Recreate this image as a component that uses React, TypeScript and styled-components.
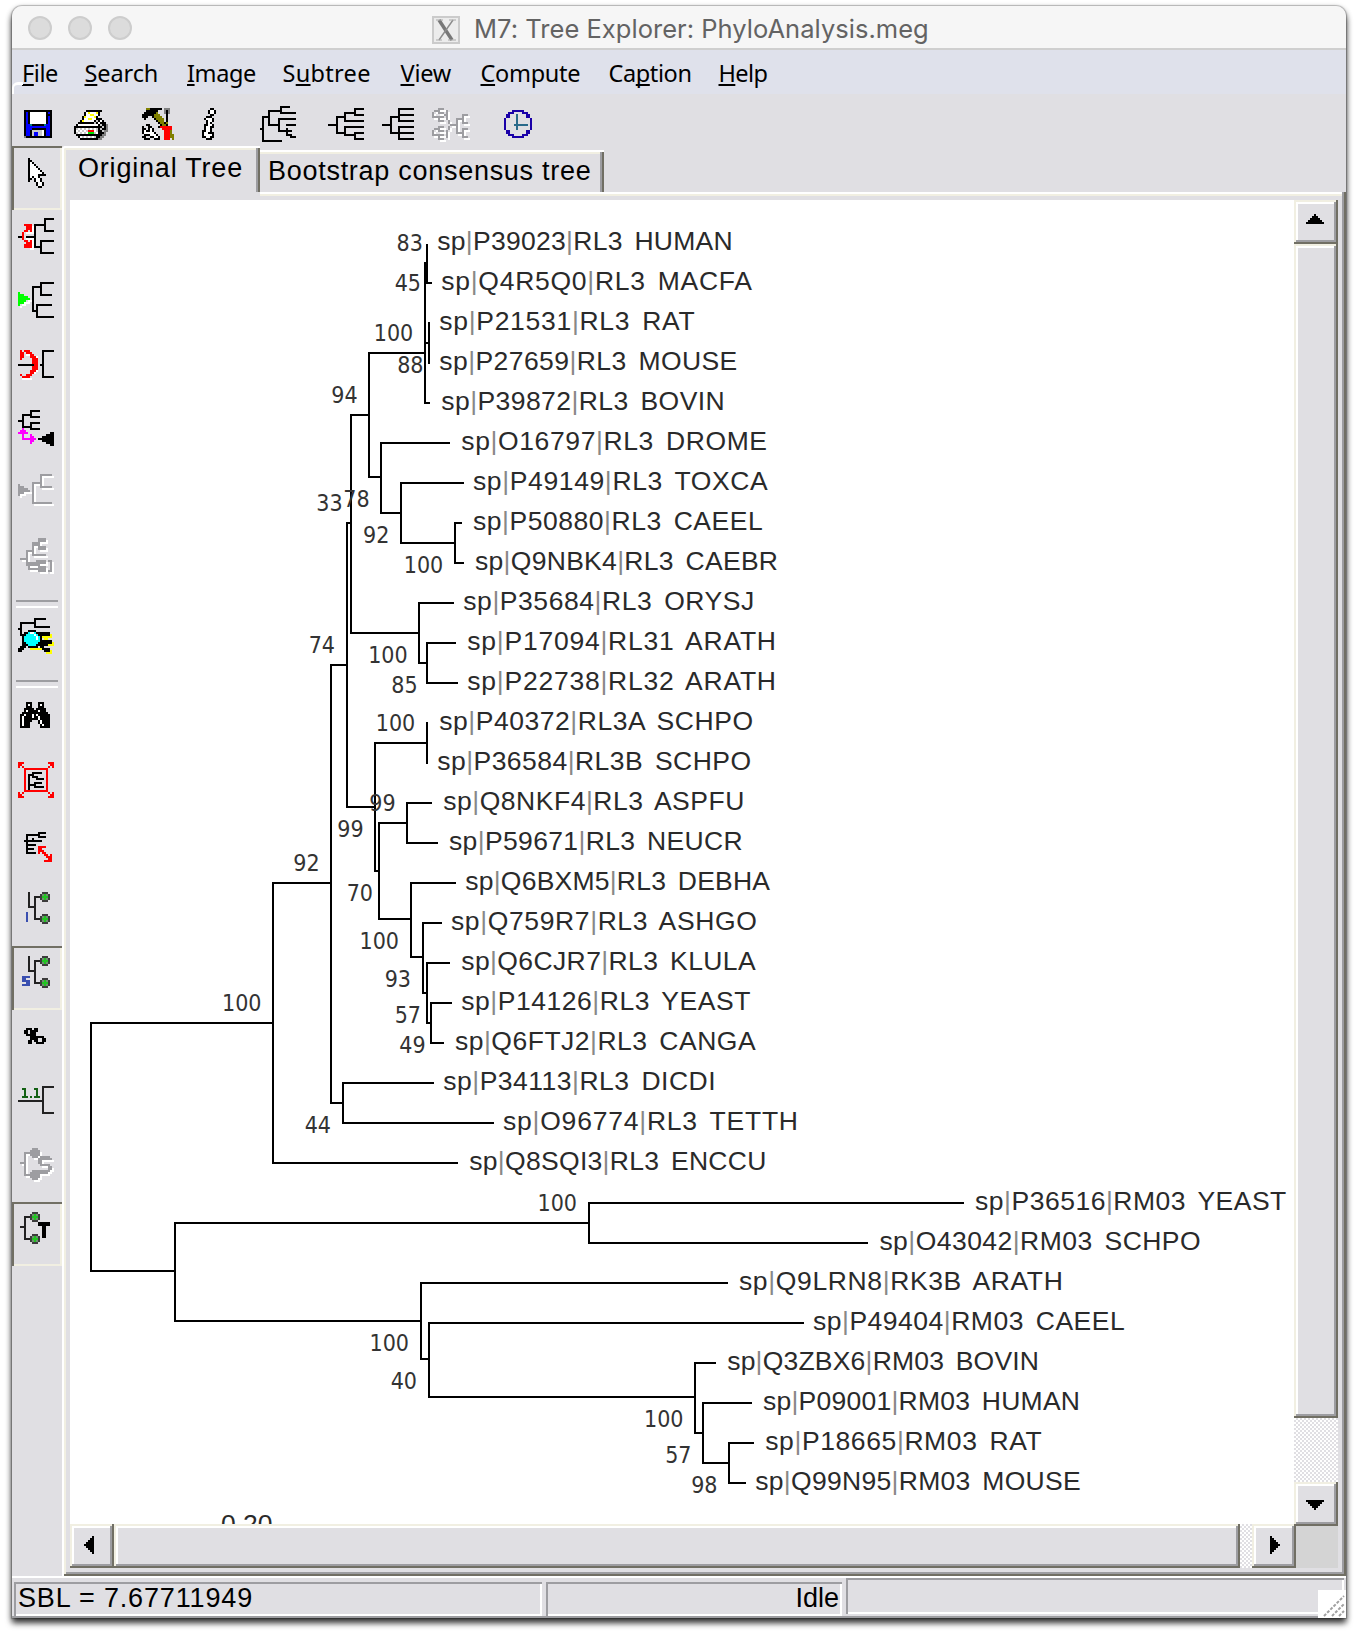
import React from "react";
import styled, { createGlobalStyle, css } from "styled-components";

const C = {
  face: "#e0dfe3",
  cream: "#f1efe2",
  shade: "#9d9da1",
  dark: "#716f64",
  menu: "#dfe1eb",
};

const Global = createGlobalStyle`
  html, body { margin: 0; padding: 0; background: #fff; }
  * { box-sizing: border-box; }
`;

/* ---------- window frame ---------- */

const Desktop = styled.div`
  width: 1358px;
  height: 1636px;
  padding: 6px 12px 18px;
  overflow: hidden;
  background: #fff;
`;

const Window = styled.div`
  width: 1334px;
  height: 1612px;
  display: flex;
  flex-direction: column;
  background: ${C.face};
  border-radius: 10px 10px 0 0;
  box-shadow: 0 0 1px 1px rgba(0, 0, 0, 0.22), 0 5px 6px rgba(0, 0, 0, 0.75), 0 2px 6px rgba(0, 0, 0, 0.3);
`;

const TitleBar = styled.div`
  height: 44px;
  flex: none;
  display: flex;
  align-items: center;
  padding-left: 16px;
  background: #f6f6f6;
  border-bottom: 2px solid #cfcfcf;
  border-radius: 10px 10px 0 0;
`;

const Lights = styled.div`
  display: flex;
  gap: 16px;
  width: 404px;
  margin-top: 2px;
`;

const Light = styled.span`
  width: 24px;
  height: 24px;
  border-radius: 50%;
  background: #dcdcdc;
  border: 2px solid #cdcdcd;
`;

const XBadge = styled.span`
  width: 28px;
  height: 28px;
  margin-top: 5px;
  border: 2px solid #cbcbcb;
  background: #ececec;
  display: flex;
`;

const TitleText = styled.span`
  margin-left: 14px;
  margin-top: 4px;
  font: 25.5px/40px Inter, "Liberation Sans", sans-serif;
  letter-spacing: 0.03px;
  color: #636363;
  white-space: nowrap;
`;

const MenuBar = styled.div`
  position: relative;
  height: 44px;
  flex: none;
  display: flex;
  padding-left: 10px;
  background: ${C.menu};
  &::before {
    content: "";
    position: absolute;
    left: 0;
    top: 32px;
    width: 9px;
    height: 9px;
    border-top: 3px solid #fff;
    border-left: 2px solid #fff;
    border-top-left-radius: 6px;
  }
`;

const MenuItem = styled.span<{ $w: number; $ls?: number }>`
  width: ${(p) => p.$w}px;
  flex: none;
  font: 23.5px/46px "Noto Sans", "DejaVu Sans", sans-serif;
  letter-spacing: ${(p) => p.$ls ?? 0}px;
  color: #000;
  white-space: nowrap;
`;

const Key = styled.span`
  text-decoration: underline;
  text-decoration-thickness: 2px;
  text-underline-offset: 2px;
  text-decoration-skip-ink: none;
`;

const ToolBar = styled.div`
  height: 52px;
  flex: none;
  display: flex;
  align-items: flex-start;
  padding: 12px 0 0 12px;
`;

const ToolIcon = styled.svg<{ $gap?: number }>`
  flex: none;
  display: block;
  margin-left: ${(p) => p.$gap ?? 0}px;
  shape-rendering: crispEdges;
`;

const Body = styled.div`
  height: 1430px;
  flex: none;
  display: flex;
`;

const Rail = styled.div`
  width: 50px;
  flex: none;
  display: flex;
  flex-direction: column;
`;

const RailButton = styled.div<{ $down?: boolean }>`
  height: 64px;
  flex: none;
  ${(p) =>
    p.$down &&
    css`
      box-shadow: inset 2px 2px ${C.dark}, inset -2px -2px ${C.cream};
    `}
`;

const RailGlyph = styled.svg`
  display: block;
  width: 50px;
  height: 64px;
  shape-rendering: crispEdges;
`;

const RailRule = styled.div`
  height: 16px;
  flex: none;
  padding: 6px 4px;
  &::before {
    content: "";
    display: block;
    height: 4px;
    border-top: 2px solid ${C.shade};
    border-bottom: 2px solid #fff;
  }
`;

const Pane = styled.div`
  width: 1284px;
  display: flex;
  flex-direction: column;
`;

const Tabs = styled.div`
  height: 46px;
  flex: none;
  display: flex;
  align-items: flex-end;
`;

const Tab = styled.div<{ $active?: boolean; $w: number; $ls: number }>`
  width: ${(p) => p.$w}px;
  height: ${(p) => (p.$active ? 48 : 42)}px;
  margin-bottom: ${(p) => (p.$active ? -2 : 0)}px;
  padding-left: ${(p) => (p.$active ? 16 : 8)}px;
  font: 27px/${(p) => (p.$active ? 44 : 43)}px "Liberation Sans", Arial, sans-serif;
  letter-spacing: ${(p) => p.$ls}px;
  white-space: nowrap;
  color: #000;
  background: ${C.face};
  border-top-left-radius: ${(p) => (p.$active ? 4 : 0)}px;
  box-shadow:
    ${(p) => (p.$active ? "inset 2px 0 #fff," : "")}
    inset 0 2px #fff,
    inset -2px 0 ${C.dark},
    inset -4px 0 ${C.shade},
    ${(p) => (p.$active ? `inset 4px 0 ${C.cream},` : "")}
    inset 0 4px ${C.cream};
`;

const Sheet = styled.div`
  height: 1384px;
  flex: none;
  padding: 8px 8px 8px 8px;
  box-shadow: inset 2px 0 #fff, inset -2px -2px ${C.dark}, inset 4px 0 ${C.cream}, inset -4px -4px ${C.shade},
    inset 0 2px #fff, inset 0 4px ${C.cream};
`;

const TabSeam = styled.div`
  height: 4px;
  width: 194px;
  margin: -8px 0 4px -4px;
  background: ${C.face};
`;

const Viewport = styled.div`
  display: grid;
  grid-template-columns: 1224px 44px;
  grid-template-rows: 1324px 44px;
`;

const Canvas = styled.svg`
  display: block;
  width: 1224px;
  height: 1324px;
  background: #fff;
  overflow: hidden;
`;

const LeafText = styled.text`
  font: 26.5px "Liberation Sans", Arial, sans-serif;
  word-spacing: 4px;
  fill: #2a2a2a;
`;

const SupportText = styled.text`
  font: 23px "DejaVu Sans Condensed", "DejaVu Sans", sans-serif;
  font-stretch: condensed;
  text-anchor: end;
  fill: #333;
`;

const bevel = css`
  background: ${C.face};
  box-shadow: inset -2px -2px ${C.dark}, inset 2px 2px ${C.cream}, inset -4px -4px ${C.shade}, inset 4px 4px #fff;
`;

const VScroll = styled.div`
  height: 1326px;
  display: flex;
  flex-direction: column;
  z-index: 1;
`;

const HScroll = styled.div`
  width: 1226px;
  display: flex;
`;

const ScrollBtn = styled.div`
  width: 44px;
  height: 44px;
  flex: none;
  ${bevel}
`;

const Thumb = styled.div<{ $w: number; $h: number }>`
  width: ${(p) => p.$w}px;
  height: ${(p) => p.$h}px;
  flex: none;
  ${bevel}
`;

const Track = styled.div`
  flex: 1;
  background: repeating-conic-gradient(${C.face} 0 25%, #fff 0 50%) 0 0 / 4px 4px;
`;

const Corner = styled.div`
  margin: 2px 0 0 2px;
  background: #d4d4d4;
`;

const Status = styled.div`
  height: 42px;
  flex: none;
  display: flex;
  align-items: flex-start;
  border-top: 2px solid #fff;
  border-bottom: 2px solid ${C.shade};
  padding-left: 2px;
`;

const Field = styled.div<{ $w: number; $mt: number; $h: number; $gap?: number; $right?: boolean; $ls?: number }>`
  width: ${(p) => p.$w}px;
  height: ${(p) => p.$h}px;
  margin-top: ${(p) => p.$mt}px;
  margin-left: ${(p) => p.$gap ?? 0}px;
  padding: 0 3px 0 4px;
  text-align: ${(p) => (p.$right ? "right" : "left")};
  font: 27px/32px "Liberation Sans", Arial, sans-serif;
  letter-spacing: ${(p) => p.$ls ?? 0}px;
  color: #000;
  box-shadow: inset 2px 2px ${C.shade}, inset -2px -2px #fff;
`;

const Grip = styled.svg`
  width: 28px;
  height: 28px;
  flex: none;
  margin: 12px 0 -2px -26px;
  background: #fff;
  z-index: 1;
`;

/* ---------- pixel drawing helpers ---------- */

type Box = [number, number, number, number];

const Px = ({ r, c = "#000" }: { r: Box[]; c?: string }) => (
  <path fill={c} d={r.map(([x, y, w, h]) => `M${x} ${y}h${w}v${h}h${-w}z`).join("")} />
);

const PALETTE: Record<string, string> = {
  k: "#000",
  w: "#fff",
  y: "#ffff00",
  g: "#808080",
  s: "#c8c8c8",
  r: "#ff0000",
  n: "#00e000",
  o: "#808000",
  b: "#0000ff",
  t: "#008080",
};

const Bitmap = ({ rows, x = 0, y = 0 }: { rows: string[]; x?: number; y?: number }) => (
  <g transform={`translate(${x} ${y})`}>
    {rows.flatMap((row, j) =>
      [...row].map((ch, i) =>
        ch === "." ? null : <rect key={`${i}-${j}`} x={i} y={j} width={1} height={1} fill={PALETTE[ch]} />
      )
    )}
  </g>
);

const Disabled = ({ draw }: { draw: (c: string) => React.ReactNode }) => (
  <>
    <g transform="translate(1 1)">{draw("#fff")}</g>
    {draw(C.shade)}
  </>
);

/* ---------- top toolbar artwork ---------- */

const FLOPPY = [
  "kkkkkkkkkkkkkk",
  "kbkwwwwwwwwkbk",
  "kbkwwwwwwwwkkk",
  "kbkwwwwwwwwkbk",
  "kbkwwwwwwwwkbk",
  "kbkwwwwwwwwkbk",
  "kbkwwwwwwwwkbk",
  "kbbtkkkkkktbbk",
  "kbbbbbbbbbbbbk",
  "kbbbkkkkkkkbbk",
  "kbbkssssswkbbk",
  "kbbksbbsswkbbk",
  "kbbksbbsswkbbk",
  "gkkkkkkkkkkkkk",
];
const PRINTER = [
  "......kkkkkkkk...",
  ".....kwywwwyk....",
  ".....kwwyywwk....",
  "....kywwwwyk.....",
  "....kwwyywwkkk...",
  "...kywwwwwkskwk..",
  "..kkkkkkkkskwkkk.",
  ".kwwwwwwwwwwkskkg",
  "kkkkkkkkkkkkkkskg",
  "kswswswswswskskkg",
  "kwswswsrrrwskksgg",
  "kswswswnnnswkkkg.",
  ".kkkkkkkkkkkkkgg.",
  "..kwswswswskkgg..",
  "...kkkkkkkkkgg...",
];
const TOOLS = [
  "..ookkkkkk.ggg..",
  "..kkkkkk...gkg..",
  ".kkkkkko...gkg..",
  "kkkkkkooo...k...",
  "kkk..koooo..k...",
  ".k....koooo.k...",
  ".......kooo.k...",
  "........kooko...",
  "..kk.....kook...",
  "k..kk...krrrrrr.",
  "kk.kwk....rrrrr.",
  "kwkkwk.....rrro.",
  "kwwwwwk....rrro.",
  ".kkkwwwk...rrroo",
  "kk..kkwwk..rrroo",
  ".kkk..kkk..rrr.o",
];
const INFO = [
  "....kk.",
  "...kwwk",
  "...kwwk",
  "....kk.",
  "..kkk..",
  ".kwwwk.",
  "..kwwk.",
  "..kwk..",
  ".kkwwk.",
  ".kwwkk.",
  ".kwwk..",
  "kkwwk..",
  "kwwkkk.",
  "kwwwwk.",
  "kkwwkk.",
  "..kkk..",
];

const BUTTERFLY: Box[] = [
  [1, 1, 2, 1], [0, 2, 1, 3], [3, 0, 3, 1], [3, 0, 1, 3], [3, 2, 3, 1], [1, 4, 2, 1], [3, 4, 3, 1], [3, 4, 1, 3], [3, 6, 3, 1],
  [7, 1, 1, 5], [6, 3, 1, 1], [8, 6, 1, 2], [9, 8, 4, 1], [8, 9, 1, 2], [7, 11, 1, 4],
  [1, 10, 2, 1], [0, 11, 1, 3], [3, 9, 3, 1], [3, 9, 1, 3], [3, 11, 3, 1], [1, 13, 2, 1], [3, 13, 3, 1], [3, 13, 1, 3], [3, 15, 3, 1],
  [12, 5, 1, 8], [12, 5, 3, 1], [15, 3, 1, 5], [15, 3, 3, 1], [15, 7, 3, 1], [12, 12, 3, 1], [15, 10, 1, 5], [15, 10, 3, 1],
  [15, 14, 3, 1],
];

/* ---------- rail artwork ---------- */

const POINTER = [
  "k........",
  "kk.......",
  "kwk......",
  "kwwk.....",
  "kwwwk....",
  "kwwwwk...",
  "kwwwwwk..",
  "kwwwwwwk.",
  "kwwwwkkkk",
  "kwkwwk...",
  "kk.kwwk..",
  "k..kwwk..",
  "....kwwk.",
  "....kwwk.",
  ".....kk..",
];
const BINOCULARS = [
  "...kkk...kkk...",
  "...kwk...kwk...",
  "...kkk...kkk...",
  "..kkkkk.kkkkk..",
  "..kwkkkkkwkkk..",
  ".kkkkkkkkkkkkk.",
  "kkwkkkwkwkkkkkk",
  "kwkkkkwkkwkkkkk",
  "kwkkkkkkkwkkkkk",
  "kwkkkk...kwkkkk",
  "kwkkk....kwkkkk",
  "kwkkk.....kwkkk",
  "kkkkk.....kkkkk",
];
const PERCENT = [
  ".kkk.kk....",
  "kk.kkkk....",
  "kk.kkk.....",
  ".kkkkk.....",
  "...kkkkkkk.",
  "...kkkk..kk",
  "..kk.kk..kk",
  "..kk..kkkk.",
];

const Dot = ({ x, y, c }: { x: number; y: number; c?: string }) => (
  <>
    <Px c={c ?? "#3c3c3c"} r={[[x + 1, y, 3, 5], [x, y + 1, 5, 3]]} />
    {!c && <Px c="#6f8f6f" r={[[x + 1, y + 1, 3, 3]]} />}
    {!c && <Px c="#22c422" r={[[x + 2, y + 1, 1, 3], [x + 1, y + 2, 3, 1]]} />}
  </>
);

const TipTree = ({ children }: { children?: React.ReactNode }) => (
  <>
    <Px c="#222" r={[[8, 5, 1, 8], [8, 12, 3, 1], [11, 7, 1, 12], [11, 7, 3, 1], [11, 18, 3, 1]]} />
    <Dot x={14} y={5} />
    <Dot x={14} y={16} />
    {children}
  </>
);

type RailEntry = { id: string; down?: boolean; art?: React.ReactNode };

const RAIL: RailEntry[] = [
  { id: "pointer", down: true, art: <Bitmap rows={POINTER} x={8} y={6} /> },
  {
    id: "swap",
    art: (
      <>
        <Px c="#fff" r={[[7, 11, 4, 1], [10, 8, 1, 4], [7, 14, 4, 1], [9, 19, 2, 1], [10, 15, 1, 5]]} />
        <Px r={[[3, 13, 2, 1], [7, 13, 4, 1], [11, 7, 1, 12], [11, 7, 5, 1], [16, 4, 1, 7], [16, 4, 5, 1], [16, 10, 5, 1],
          [11, 18, 3, 1], [14, 15, 1, 7], [14, 15, 7, 1], [14, 21, 7, 1]]} />
        <Px c="#f00" r={[[6, 7, 4, 1], [7, 8, 3, 1], [7, 9, 3, 1], [6, 10, 2, 1], [9, 10, 1, 1], [5, 11, 1, 4], [6, 15, 2, 1],
          [7, 16, 3, 1], [6, 17, 4, 2], [9, 15, 1, 1]]} />
      </>
    ),
  },
  {
    id: "root",
    art: (
      <>
        <Px c="#fff" r={[[4, 16, 1, 1], [5, 15, 2, 1], [6, 14, 3, 1], [8, 13, 2, 1]]} />
        <Px c="#0f0" r={[[3, 9, 1, 7], [4, 10, 2, 5], [6, 11, 1, 3], [7, 12, 2, 1], [7, 11, 1, 2]]} />
        <Px r={[[10, 6, 1, 13], [10, 6, 4, 1], [14, 4, 1, 7], [14, 4, 7, 1], [14, 10, 6, 1], [10, 18, 3, 1], [12, 15, 1, 7],
          [12, 15, 8, 1], [12, 21, 9, 1]]} />
      </>
    ),
  },
  {
    id: "flip",
    art: (
      <>
        <Px c="#fff" r={[[7, 8, 3, 1], [12, 14, 1, 3], [10, 17, 2, 1], [7, 20, 3, 1], [5, 20, 2, 1], [12, 9, 1, 3]]} />
        <Px c="#f00" r={[[4, 6, 1, 5], [5, 7, 1, 3], [6, 6, 3, 1], [7, 7, 3, 1], [9, 8, 2, 2], [10, 9, 2, 8], [9, 16, 2, 2],
          [11, 10, 2, 6], [7, 18, 3, 1], [5, 19, 4, 1], [4, 18, 1, 1]]} />
        <Px r={[[3, 13, 8, 1], [14, 13, 1, 1], [15, 6, 1, 14], [15, 6, 6, 1], [15, 19, 6, 1]]} />
      </>
    ),
  },
  {
    id: "compress",
    art: (
      <>
        <Px r={[[3, 9, 2, 1], [5, 6, 1, 7], [5, 6, 4, 1], [9, 4, 1, 4], [9, 4, 5, 1], [9, 7, 5, 1], [5, 12, 4, 1], [9, 10, 1, 4],
          [9, 10, 5, 1], [9, 13, 5, 1]]} />
        <Px c="#f0f" r={[[5, 13, 1, 6], [4, 14, 3, 1], [3, 15, 5, 1], [5, 18, 7, 1], [9, 16, 1, 5], [10, 17, 1, 3]]} />
        <Px r={[[13, 18, 2, 1], [15, 17, 2, 3], [17, 16, 2, 5], [19, 15, 2, 7]]} />
      </>
    ),
  },
  {
    id: "expand",
    art: (
      <Disabled
        draw={(c) => (
          <Px c={c} r={[[3, 9, 1, 6], [4, 10, 2, 4], [6, 11, 2, 2], [8, 12, 1, 1], [10, 8, 1, 11], [10, 8, 4, 1], [14, 4, 1, 7],
            [14, 4, 6, 1], [14, 10, 6, 1], [10, 18, 10, 1]]} />
        )}
      />
    ),
  },
  {
    id: "group",
    art: (
      <Disabled
        draw={(c) => (
          <Px c={c} r={[[4, 14, 3, 1], [7, 10, 1, 7], [7, 10, 4, 1], [10, 6, 1, 7], [10, 6, 3, 2], [13, 4, 4, 2], [12, 6, 2, 2],
            [13, 8, 4, 2], [10, 12, 7, 1], [7, 16, 7, 2], [8, 18, 1, 2], [8, 19, 8, 1], [12, 15, 5, 2], [13, 18, 4, 3],
            [18, 15, 2, 1], [19, 15, 1, 6], [18, 20, 2, 1]]} />
        )}
      />
    ),
  },
  { id: "rule-1" },
  {
    id: "zoom",
    art: (
      <>
        <Px c="#ff0" r={[[9, 19, 6, 1], [15, 13, 5, 1], [19, 12, 1, 2], [18, 17, 3, 1], [20, 16, 1, 1], [17, 21, 3, 1], [19, 20, 1, 1], [16, 14, 2, 1]]} />
        <Px r={[[3, 9, 1, 1], [4, 6, 1, 7], [4, 6, 7, 1], [11, 4, 1, 5], [11, 4, 6, 1], [11, 8, 8, 1], [14, 11, 5, 2], [13, 16, 3, 1],
          [15, 15, 5, 2], [14, 17, 4, 1], [14, 18, 2, 1], [15, 19, 2, 1], [16, 20, 3, 1], [17, 19, 2, 1],
          [8, 10, 4, 1], [6, 11, 8, 1], [5, 12, 10, 5], [6, 17, 8, 1], [8, 18, 5, 1], [5, 17, 2, 2], [4, 18, 2, 2], [3, 19, 2, 2]]} />
        <Px c="#0ff" r={[[8, 11, 4, 1], [7, 12, 6, 1], [6, 13, 8, 3], [7, 16, 6, 1], [8, 17, 4, 1]]} />
        <Px c="#fff" r={[[9, 11, 2, 1], [11, 12, 1, 1], [12, 13, 1, 2]]} />
      </>
    ),
  },
  { id: "rule-2" },
  { id: "find", art: <Bitmap rows={BINOCULARS} x={4} y={6} /> },
  {
    id: "fit",
    art: (
      <>
        <Px c="#f00" r={[[6, 7, 12, 1], [6, 18, 12, 1], [6, 7, 1, 12], [17, 7, 1, 12],
          [3, 4, 3, 1], [3, 5, 2, 1], [3, 6, 1, 1], [5, 6, 1, 1], [18, 4, 3, 1], [19, 5, 2, 1], [20, 6, 1, 1], [18, 6, 1, 1],
          [3, 21, 3, 1], [3, 20, 2, 1], [3, 19, 1, 1], [5, 19, 1, 1], [18, 21, 3, 1], [19, 20, 2, 1], [20, 19, 1, 1], [18, 19, 1, 1]]} />
        <Px r={[[8, 10, 1, 8], [8, 10, 3, 1], [10, 9, 5, 1], [10, 9, 1, 3], [10, 11, 3, 1], [12, 12, 4, 1], [8, 15, 4, 1], [11, 14, 4, 1],
          [11, 14, 1, 3], [12, 16, 4, 1]]} />
      </>
    ),
  },
  {
    id: "resize",
    art: (
      <>
        <Px r={[[6, 11, 1, 1], [7, 8, 1, 10], [7, 8, 6, 1], [13, 7, 4, 1], [13, 7, 1, 3], [13, 9, 4, 1], [7, 11, 4, 1], [10, 10, 1, 1],
          [11, 11, 4, 1], [7, 13, 5, 1], [7, 15, 4, 1], [7, 17, 5, 1]]} />
        <Px c="#f00" r={[[13, 14, 4, 1], [13, 15, 2, 1], [13, 16, 3, 1], [13, 17, 1, 1], [15, 17, 2, 1], [16, 18, 2, 1], [17, 19, 3, 1],
          [19, 18, 1, 4], [18, 20, 2, 1], [16, 21, 4, 1]]} />
      </>
    ),
  },
  { id: "ids", art: <TipTree><Px c="#3a4fb0" r={[[7, 15, 1, 5]]} /></TipTree> },
  {
    id: "support",
    down: true,
    art: (
      <TipTree>
        <Px c="#3a4fb0" r={[[5, 15, 4, 1], [5, 16, 2, 1], [5, 17, 4, 1], [7, 18, 2, 1], [5, 19, 4, 1]]} />
      </TipTree>
    ),
  },
  { id: "percent", art: <Bitmap rows={PERCENT} x={6} y={9} /> },
  {
    id: "length",
    art: (
      <>
        <Px c="#222" r={[[3, 13, 13, 1], [15, 6, 1, 14], [15, 6, 6, 1], [15, 19, 6, 1]]} />
        <Px c="#136013" r={[[6, 7, 1, 5], [5, 7, 1, 1], [5, 11, 3, 1], [9, 11, 1, 1], [12, 7, 1, 5], [11, 7, 1, 1], [11, 11, 3, 1]]} />
      </>
    ),
  },
  {
    id: "species",
    art: (
      <Disabled
        draw={(c) => (
          <>
            <Px c={c} r={[[4, 12, 2, 1], [6, 7, 1, 12], [6, 7, 4, 1], [6, 18, 4, 1], [14, 9, 5, 1], [13, 10, 7, 1], [13, 11, 2, 2],
              [14, 13, 5, 1], [18, 14, 2, 2], [13, 16, 6, 1], [13, 17, 5, 1]]} />
            <Dot x={9} y={5} c={c} />
            <Dot x={9} y={16} c={c} />
          </>
        )}
      />
    ),
  },
  {
    id: "taxa",
    down: true,
    art: (
      <>
        <Px c="#222" r={[[4, 12, 2, 1], [6, 7, 1, 12], [6, 7, 3, 1], [6, 18, 3, 1]]} />
        <Dot x={9} y={5} />
        <Dot x={9} y={16} />
        <Px r={[[13, 10, 6, 2], [15, 12, 2, 6]]} />
      </>
    ),
  },
];

/* ---------- phylogeny data ---------- */

type Leaf = [name: string, start: number, end: number];

const LEAVES: Leaf[] = [
  ["sp|P39023|RL3 HUMAN", 437.3, 730.7],
  ["sp|Q4R5Q0|RL3 MACFA", 441.3, 750],
  ["sp|P21531|RL3 RAT", 439.3, 692.7],
  ["sp|P27659|RL3 MOUSE", 439.3, 735.3],
  ["sp|P39872|RL3 BOVIN", 441.3, 722.7],
  ["sp|O16797|RL3 DROME", 461.3, 765],
  ["sp|P49149|RL3 TOXCA", 473, 765.7],
  ["sp|P50880|RL3 CAEEL", 473, 760.7],
  ["sp|Q9NBK4|RL3 CAEBR", 475, 776],
  ["sp|P35684|RL3 ORYSJ", 463.3, 752.3],
  ["sp|P17094|RL31 ARATH", 467.3, 774],
  ["sp|P22738|RL32 ARATH", 467.3, 774],
  ["sp|P40372|RL3A SCHPO", 439.3, 751],
  ["sp|P36584|RL3B SCHPO", 437.3, 749],
  ["sp|Q8NKF4|RL3 ASPFU", 443.3, 742.3],
  ["sp|P59671|RL3 NEUCR", 449, 740.7],
  ["sp|Q6BXM5|RL3 DEBHA", 465.3, 768],
  ["sp|Q759R7|RL3 ASHGO", 451, 754.8],
  ["sp|Q6CJR7|RL3 KLULA", 461.3, 753.6],
  ["sp|P14126|RL3 YEAST", 461.3, 748.4],
  ["sp|Q6FTJ2|RL3 CANGA", 455, 753.6],
  ["sp|P34113|RL3 DICDI", 443.3, 713.6],
  ["sp|O96774|RL3 TETTH", 503, 796],
  ["sp|Q8SQI3|RL3 ENCCU", 469.3, 764.3],
  ["sp|P36516|RM03 YEAST", 975.1, 1284.3],
  ["sp|O43042|RM03 SCHPO", 879.4, 1198.6],
  ["sp|Q9LRN8|RK3B ARATH", 739, 1060.8],
  ["sp|P49404|RM03 CAEEL", 813, 1122.7],
  ["sp|Q3ZBX6|RM03 BOVIN", 727.2, 1037],
  ["sp|P09001|RM03 HUMAN", 763, 1078],
  ["sp|P18665|RM03 RAT", 765.2, 1039.7],
  ["sp|Q99N95|RM03 MOUSE", 755.2, 1078.7],
];

/* x of the fork, upper child y and end x, lower child y and end x */
type Fork = [x: number, y1: number, x1: number, y2: number, x2: number];

const FORKS: Fork[] = [
  [91, 1023, 273, 1271, 175],
  [273, 883, 331, 1163, 458],
  [331, 665, 347, 1103, 343],
  [347, 523, 351, 807, 375],
  [351, 415, 369, 633, 419],
  [369, 353, 425, 477, 381],
  [425, 263, 427, 403, 430],
  [427, 245, 428, 283, 432],
  [429, 323, 430, 363, 430],
  [381, 443, 450, 513, 401],
  [401, 483, 464, 543, 455],
  [455, 523, 462, 563, 464],
  [419, 603, 454, 663, 427],
  [427, 643, 456, 683, 458],
  [375, 743, 427, 871, 379],
  [427, 723, 428, 763, 428],
  [379, 823, 407, 919, 411],
  [407, 803, 432, 843, 438],
  [411, 883, 456, 957, 423],
  [423, 923, 442, 993, 427],
  [427, 963, 450, 1023, 431],
  [431, 1003, 452, 1043, 444],
  [343, 1083, 434, 1123, 494],
  [175, 1223, 589, 1321, 421],
  [589, 1203, 964, 1243, 868],
  [421, 1283, 728, 1359, 429],
  [429, 1323, 804, 1397, 695],
  [695, 1363, 716, 1433, 703],
  [703, 1403, 752, 1463, 729],
  [729, 1443, 754, 1483, 746],
];

type Support = [value: number, right: number, baseline: number];

const SUPPORT: Support[] = [
  [83, 421.8, 251], [45, 420, 291], [100, 412.3, 341], [88, 422.5, 373], [94, 356.7, 403], [33, 341.7, 511],
  [78, 368.7, 507], [92, 388.3, 543], [100, 442.3, 573], [74, 334, 653], [100, 406.7, 663], [85, 416.7, 693],
  [100, 414.3, 731], [99, 394.7, 811], [99, 362.7, 837], [92, 318.7, 871], [70, 372, 901], [100, 398, 949],
  [93, 410, 987], [57, 420, 1023], [49, 424.7, 1053], [100, 260.5, 1011], [44, 330, 1133], [100, 576, 1211],
  [100, 408, 1351], [40, 416, 1389], [100, 682.5, 1427], [57, 690.5, 1463], [98, 716.5, 1493],
];

const TreeDrawing = () => (
  <Canvas viewBox="70 200 1224 1324">
    <path
      d={FORKS.map(([x, y1, x1, y2, x2]) => `M${x1} ${y1}H${x}V${y2}H${x2}`).join("") + "M425 343H429"}
      fill="none"
      stroke="#000"
      strokeWidth={2}
      shapeRendering="crispEdges"
    />
    {LEAVES.map(([name, start, end], i) => (
      <LeafText key={name} x={start} y={249.5 + i * 40} textLength={end - start + 2}>
        {name.split("|").map((part, k) => (
          <React.Fragment key={k}>
            {k > 0 && <tspan fill="#888">|</tspan>}
            <tspan>{part}</tspan>
          </React.Fragment>
        ))}
      </LeafText>
    ))}
    <LeafText x={221} y={1533}>0.20</LeafText>
    {SUPPORT.map(([v, x, y]) => (
      <SupportText key={`${x}-${y}`} x={x + 1} y={y}>{v}</SupportText>
    ))}
  </Canvas>
);

/* ---------- scroll arrows ---------- */

const arrowRows = [0, 1, 2, 3, 4];

const Arrow = ({ dir }: { dir: "up" | "down" | "left" | "right" }) => {
  const boxes: Box[] = arrowRows.map((i) => {
    if (dir === "up") return [10 - i, 7 + i, 1 + 2 * i, 1];
    if (dir === "down") return [10 - i, 13 - i, 1 + 2 * i, 1];
    if (dir === "left") return [7 + i, 10 - i, 1, 1 + 2 * i];
    return [13 - i, 10 - i, 1, 1 + 2 * i];
  });
  return (
    <ToolIcon width={44} height={44} viewBox="0 0 22 22">
      <Px r={boxes} />
    </ToolIcon>
  );
};

const MENU: [before: string, key: string, after: string, width: number, spacing: number][] = [
  ["", "F", "ile", 62.5, -0.4],
  ["", "S", "earch", 102.5, -0.1],
  ["", "I", "mage", 95.5, -0.4],
  ["S", "u", "btree", 118, 0.3],
  ["", "V", "iew", 80, -0.2],
  ["", "C", "ompute", 128, -0.3],
  ["Ca", "p", "tion", 110, -0.4],
  ["", "H", "elp", 60, -0.6],
];

export default function App() {
  return (
    <>
      <Global />
      <Desktop>
        <Window>
          <TitleBar>
            <Lights>
              <Light />
              <Light />
              <Light />
            </Lights>
            <XBadge>
              <svg width="24" height="24" viewBox="0 0 24 24" fill="none">
                <path d="M5 2L18 22" stroke="#777" strokeWidth="3.4" />
                <path d="M19 2L5 22" stroke="#8a8a8a" strokeWidth="1.4" />
                <path d="M2 2H9M15 2H22M2 22H8M14 22H22" stroke="#aaa" strokeWidth="1.2" />
              </svg>
            </XBadge>
            <TitleText>M7: Tree Explorer: PhyloAnalysis.meg</TitleText>
          </TitleBar>
          <MenuBar>
            {MENU.map(([a, k, b, w, ls]) => (
              <MenuItem key={k} $w={w} $ls={ls}>
                {a}
                <Key>{k}</Key>
                {b}
              </MenuItem>
            ))}
          </MenuBar>
          <ToolBar>
            <ToolIcon width={28} height={36} viewBox="0 -2 14 18"><Bitmap rows={FLOPPY} /></ToolIcon>
            <ToolIcon $gap={22} width={34} height={36} viewBox="0 -2 17 18"><Bitmap rows={PRINTER} /></ToolIcon>
            <ToolIcon $gap={34} width={32} height={36} viewBox="0 -1 16 18"><Bitmap rows={TOOLS} /></ToolIcon>
            <ToolIcon $gap={28} width={14} height={36} viewBox="0 -1 7 18"><Bitmap rows={INFO} /></ToolIcon>
            <ToolIcon $gap={44} width={36} height={36} viewBox="0 0 18 18">
              <Px r={[[0, 11, 2, 1], [1, 5, 1, 13], [1, 17, 10, 1], [1, 5, 3, 1], [4, 2, 1, 8], [4, 2, 6, 1], [10, 0, 1, 4],
                [10, 0, 5, 1], [10, 3, 8, 1], [4, 9, 5, 1], [9, 6, 1, 7], [9, 6, 9, 1], [9, 12, 4, 1], [13, 9, 5, 1],
                [13, 11, 1, 4], [13, 12, 3, 1], [14, 14, 2, 1], [15, 14, 1, 2], [15, 15, 3, 1]]} />
            </ToolIcon>
            <ToolIcon $gap={32} width={36} height={36} viewBox="0 -1 18 18">
              <Px r={[[0, 8, 5, 1], [4, 4, 1, 9], [4, 4, 4, 1], [8, 2, 1, 5], [8, 2, 5, 1], [13, 0, 1, 4], [13, 0, 5, 1], [13, 3, 5, 1],
                [8, 6, 10, 1], [4, 12, 4, 1], [8, 9, 1, 5], [8, 9, 10, 1], [8, 13, 5, 1], [13, 12, 1, 4], [13, 12, 5, 1], [13, 15, 5, 1]]} />
            </ToolIcon>
            <ToolIcon $gap={18} width={34} height={36} viewBox="0 -1 17 18">
              <Px r={[[0, 8, 4, 1], [4, 4, 1, 9], [4, 4, 4, 1], [4, 12, 4, 1], [8, 0, 1, 7], [8, 0, 8, 1], [8, 3, 8, 1], [8, 6, 8, 1],
                [8, 9, 1, 7], [8, 9, 8, 1], [8, 12, 8, 1], [8, 15, 8, 1]]} />
            </ToolIcon>
            <ToolIcon $gap={16} width={38} height={36} viewBox="0 -1 19 18">
              <Disabled draw={(c) => <Px r={BUTTERFLY} c={c} />} />
            </ToolIcon>
            <ToolIcon $gap={34} width={28} height={36} viewBox="0 -2 14 18">
              <Px c="#1a00a8" r={[[4, 0, 6, 1], [2, 1, 3, 1], [9, 1, 3, 1], [1, 2, 2, 2], [11, 2, 2, 2], [0, 4, 1, 6], [13, 4, 1, 6],
                [1, 10, 2, 2], [11, 10, 2, 2], [2, 12, 3, 1], [9, 12, 3, 1], [4, 13, 6, 1]]} />
              <Px c="#2a6a8a" r={[[6, 2, 1, 8], [5, 7, 7, 1]]} />
            </ToolIcon>
          </ToolBar>
          <Body>
            <Rail>
              {RAIL.map((b) =>
                b.art ? (
                  <RailButton key={b.id} $down={b.down}>
                    <RailGlyph viewBox="0 0 25 32">{b.art}</RailGlyph>
                  </RailButton>
                ) : (
                  <RailRule key={b.id} />
                )
              )}
            </Rail>
            <Pane>
              <Tabs>
                <Tab $active $w={198} $ls={0.8}>Original Tree</Tab>
                <Tab $w={344} $ls={0.72}>Bootstrap consensus tree</Tab>
              </Tabs>
              <Sheet>
                <TabSeam />
                <Viewport>
                  <TreeDrawing />
                  <VScroll>
                    <ScrollBtn><Arrow dir="up" /></ScrollBtn>
                    <Thumb $w={44} $h={1174} />
                    <Track />
                    <ScrollBtn><Arrow dir="down" /></ScrollBtn>
                  </VScroll>
                  <HScroll>
                    <ScrollBtn><Arrow dir="left" /></ScrollBtn>
                    <Thumb $w={1126} $h={44} />
                    <Track />
                    <ScrollBtn><Arrow dir="right" /></ScrollBtn>
                  </HScroll>
                  <Corner />
                </Viewport>
              </Sheet>
            </Pane>
          </Body>
          <Status>
            <Field $w={528} $mt={4} $h={34} $ls={0.85}>SBL = 7.67711949</Field>
            <Field $w={296} $mt={4} $h={34} $gap={4} $right>Idle</Field>
            <Field $w={498} $mt={0} $h={36} $gap={4} />
            <Grip viewBox="0 0 28 28">
              <path d="M6 26L26 6M14 26L26 14M21 26L26 21" stroke="#a0a0a0" strokeWidth="2" strokeDasharray="3 1.5" />
            </Grip>
          </Status>
        </Window>
      </Desktop>
    </>
  );
}
